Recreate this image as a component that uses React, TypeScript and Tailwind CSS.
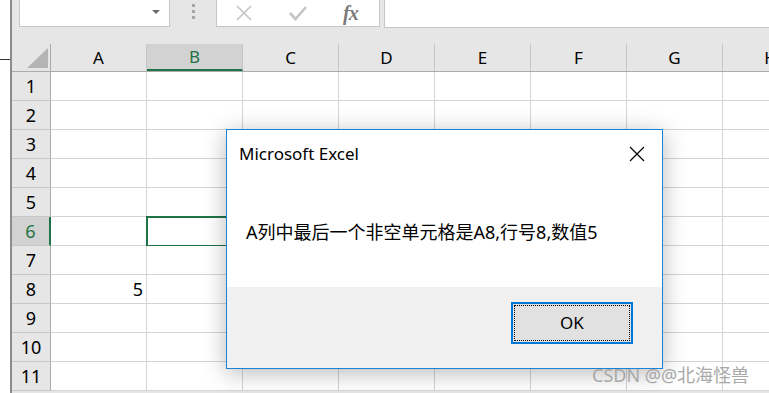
import React from 'react';

const COLS = ['A', 'B', 'C', 'D', 'E', 'F', 'G', 'H'];
const ROWS = [1, 2, 3, 4, 5, 6, 7, 8, 9, 10, 11];

const FONT = { fontFamily: '"Noto Sans", "Noto Sans CJK SC", sans-serif' };

const Toolbar: React.FC = () => (
    <div className="flex h-[28px] pl-[7px]">
        <div className="relative w-[151px] h-[27px] bg-white border border-t-0 border-[#c6c6c6]">
            <div className="absolute left-[132px] top-[10px] w-0 h-0 border-l-[4px] border-r-[4px] border-t-[4px] border-l-transparent border-r-transparent border-t-[#6b6b6b]" />
        </div>
        <div className="w-[46px] flex flex-col items-center gap-[3px] pt-[4px]">
            <span className="w-[3px] h-[3px] bg-[#a6a6a6]" />
            <span className="w-[3px] h-[3px] bg-[#a6a6a6]" />
            <span className="w-[3px] h-[3px] bg-[#a6a6a6]" />
        </div>
        <div className="w-[164px] h-[27px] bg-white border border-t-0 border-[#c6c6c6] flex items-center">
            <svg width="16" height="16" viewBox="0 0 16 16" className="ml-[19px]">
                <path d="M1 1 L15 15 M15 1 L1 15" stroke="#c4c4c4" strokeWidth="1.6" fill="none" />
            </svg>
            <svg width="18" height="16" viewBox="0 0 18 16" className="ml-[37px]">
                <path d="M1 8 L6.5 14 L17 2" stroke="#c4c4c4" strokeWidth="2.6" fill="none" />
            </svg>
            <span className="ml-[36px] text-[20px] leading-none italic font-bold text-[#7b7b7b] tracking-[-1px]" style={{ fontFamily: '"Liberation Serif", serif' }}>
                fx
            </span>
        </div>
        <div className="flex-1 ml-[4px] h-[28px] bg-white border border-t-0 border-r-0 border-[#c6c6c6]" />
    </div>
);

const Sheet: React.FC = () => (
    <div className="mt-[16px]" style={FONT}>
        <div className="flex h-[28px] border-b border-[#ababab]">
            <div className="relative w-[39px] shrink-0 h-full border-r border-[#ababab]">
                <div className="absolute left-[15px] top-[4px] w-0 h-0 border-b-[20px] border-l-[21px] border-b-[#b4b4b4] border-l-transparent" />
            </div>
            {COLS.map((c) => (
                <div
                    key={c}
                    className={`w-[96px] shrink-0 h-full flex items-center justify-center text-[17px] border-r border-[#c6c6c6] ${
                        c === 'B' ? 'bg-[#d2d2d2] text-[#217346] border-b-2 border-b-[#217346]' : 'text-black'
                    }`}
                >
                    {c}
                </div>
            ))}
        </div>
        {ROWS.map((r) => (
            <div key={r} className="flex h-[29px]">
                <div
                    className={`w-[39px] shrink-0 flex items-center justify-center text-[18px] border-b border-[#c6c6c6] ${
                        r === 6
                            ? 'bg-[#d2d2d2] text-[#217346] border-r-2 border-r-[#217346]'
                            : 'bg-[#e6e6e6] text-black border-r border-r-[#ababab]'
                    }`}
                >
                    {r}
                </div>
                {COLS.map((c) => (
                    <div
                        key={c}
                        className={`w-[96px] shrink-0 bg-white border-r border-b border-[#d4d4d4] flex items-center justify-end pr-[3px] text-[18px] text-black ${
                            r === 6 && c === 'B' ? 'outline-2 outline-[#217346] -outline-offset-1' : ''
                        }`}
                    >
                        {r === 8 && c === 'A' ? '5' : ''}
                    </div>
                ))}
            </div>
        ))}
    </div>
);

const MessageBox: React.FC = () => (
    <div
        className="absolute left-[226px] top-[129px] w-[437px] h-[240px] bg-white border border-[#1883d7] shadow-[0_4px_22px_rgba(0,0,0,0.28)] flex flex-col"
        style={FONT}
    >
        <div className="flex items-center justify-between h-[48px] pl-[12px] pr-[17px]">
            <span className="text-[17px] text-black">Microsoft Excel</span>
            <svg width="16" height="16" viewBox="0 0 16 16">
                <path d="M1 1 L15 15 M15 1 L1 15" stroke="#000" strokeWidth="1.2" fill="none" />
            </svg>
        </div>
        <div className="flex-1 pl-[19px] pt-[41px] text-[18px] text-black">
            A列中最后一个非空单元格是A8,行号8,数值5
        </div>
        <div className="h-[81px] bg-[#f0f0f0] flex justify-end items-start pt-[15px] pr-[29px]">
            <button className="w-[122px] h-[42px] bg-[#e1e1e1] border-2 border-[#0078d7] p-[1px]">
                <div className="w-full h-full border border-dotted border-black flex items-center justify-center text-[17px] text-black">
                    OK
                </div>
            </button>
        </div>
    </div>
);

const App: React.FC = () => {
    return (
        <div className="relative w-[769px] h-[393px] overflow-hidden flex bg-white">
            <div className="w-[10px] shrink-0">
                <div className="h-[60px] border-b border-[#333]" />
            </div>
            <div className="flex-1 min-w-0 bg-[#e6e6e6] border-l-2 border-[#8c8c8c] overflow-hidden">
                <Toolbar />
                <Sheet />
            </div>
            <MessageBox />
            <div
                className="absolute left-[592px] top-[362px] text-[18px] text-[#a8a8a8] whitespace-nowrap"
                style={FONT}
            >
                CSDN @@北海怪兽
            </div>
        </div>
    );
};

export default App;
